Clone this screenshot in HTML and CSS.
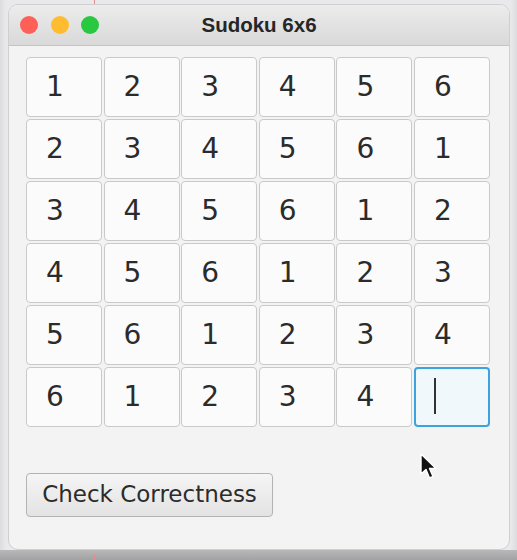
FILE: index.html
```html
<!DOCTYPE html>
<html>
<head>
<meta charset="utf-8">
<link rel="stylesheet" href="styles.css">
</head>
<body>
<div class="desktop">
  <div class="redline top"></div>
  <div class="window">
    <div class="titlebar">
      <div class="lights">
        <span class="light red"></span>
        <span class="light yellow"></span>
        <span class="light green"></span>
      </div>
      <div class="title">Sudoku 6x6</div>
    </div>
    <div class="content">
      <div class="grid">
        <div class="cell">1</div><div class="cell">2</div><div class="cell">3</div><div class="cell">4</div><div class="cell">5</div><div class="cell">6</div>
        <div class="cell">2</div><div class="cell">3</div><div class="cell">4</div><div class="cell">5</div><div class="cell">6</div><div class="cell">1</div>
        <div class="cell">3</div><div class="cell">4</div><div class="cell">5</div><div class="cell">6</div><div class="cell">1</div><div class="cell">2</div>
        <div class="cell">4</div><div class="cell">5</div><div class="cell">6</div><div class="cell">1</div><div class="cell">2</div><div class="cell">3</div>
        <div class="cell">5</div><div class="cell">6</div><div class="cell">1</div><div class="cell">2</div><div class="cell">3</div><div class="cell">4</div>
        <div class="cell">6</div><div class="cell">1</div><div class="cell">2</div><div class="cell">3</div><div class="cell">4</div><div class="cell focused"><span class="caret"></span></div>
      </div>
      <button class="check">Check Correctness</button>
    </div>
  </div>
  <div class="bottombar"></div>
  <div class="redline bottom"></div>
  <svg class="cursor" width="20" height="28" viewBox="0 0 20 28">
    <path d="M1 1 L1 21 L6 16.5 L9.5 25 L13 23.5 L9.5 15.5 L16 15.5 Z" fill="#111" stroke="#fff" stroke-width="1.4" stroke-linejoin="round"/>
  </svg>
</div>
</body>
</html>
```
FILE: styles.css
```css
html, body {
  margin: 0;
  padding: 0;
}
body {
  background: #e8e8ea;
  font-family: "DejaVu Sans", Verdana, sans-serif;
}
.desktop {
  position: relative;
  width: 517px;
  height: 560px;
  overflow: hidden;
  padding-top: 4px;
  box-sizing: border-box;
  background: linear-gradient(to right, #dcdcdf 0, #e9e9eb 6px, #e9e9eb 511px, #dcdcdf 517px);
}
.window {
  margin-left: 8px;
  width: 502px;
  height: 546px;
  box-sizing: border-box;
  border: 1px solid #cfcfcf;
  border-radius: 10px;
  background: #f3f3f3;
  overflow: hidden;
  display: flex;
  flex-direction: column;
}
.titlebar {
  height: 40px;
  flex: none;
  background: linear-gradient(#ececec, #d9d9d9);
  border-bottom: 1px solid #c4c4c4;
  display: flex;
  align-items: center;
  position: relative;
}
.lights {
  display: flex;
  gap: 12.5px;
  padding-left: 11px;
}
.light {
  width: 18px;
  height: 18px;
  border-radius: 50%;
  display: block;
}
.light.red { background: #fe5f57; }
.light.yellow { background: #febc2e; }
.light.green { background: #28c840; }
.title {
  position: absolute;
  left: 0;
  right: 0;
  text-align: center;
  font-family: "Liberation Sans", Arial, sans-serif;
  font-weight: bold;
  font-size: 20.5px;
  color: #262626;
  padding-left: 0;
}
.content {
  padding: 11px 0 0 17px;
}
.grid {
  display: grid;
  grid-template-columns: repeat(6, 76px);
  grid-auto-rows: 60px;
  column-gap: 1.6px;
  row-gap: 2px;
}
.cell {
  box-sizing: border-box;
  background: #fbfbfb;
  border: 1px solid #c9c9c9;
  border-radius: 4px;
  font-size: 28px;
  color: #2b2b2b;
  display: flex;
  align-items: center;
  padding-left: 19px;
  padding-bottom: 2px;
}
.cell.focused {
  border: 2px solid #3ca3dc;
  background: #f1f8fc;
  padding-left: 17px;
}
.caret {
  display: block;
  width: 2px;
  height: 36px;
  background: #333;
  margin-left: 1px;
}
.check {
  margin-top: 46px;
  width: 247px;
  height: 44px;
  border: 1px solid #b3b3b3;
  border-radius: 4px;
  background: linear-gradient(#f5f5f5, #e3e3e3);
  font-family: "DejaVu Sans", Verdana, sans-serif;
  font-size: 23px;
  color: #2b2b2b;
  padding: 0 0 2px 0;
  text-align: center;
}
.bottombar {
  height: 10px;
  background: linear-gradient(#b8b8b8, #a2a2a4);
}
.redline {
  position: absolute;
  left: 94px;
  width: 1px;
  background: #e09090;
}
.redline.top { top: 0; height: 4px; }
.redline.bottom { bottom: 0; height: 6px; }
.cursor {
  position: absolute;
  left: 420px;
  top: 453px;
}
```
